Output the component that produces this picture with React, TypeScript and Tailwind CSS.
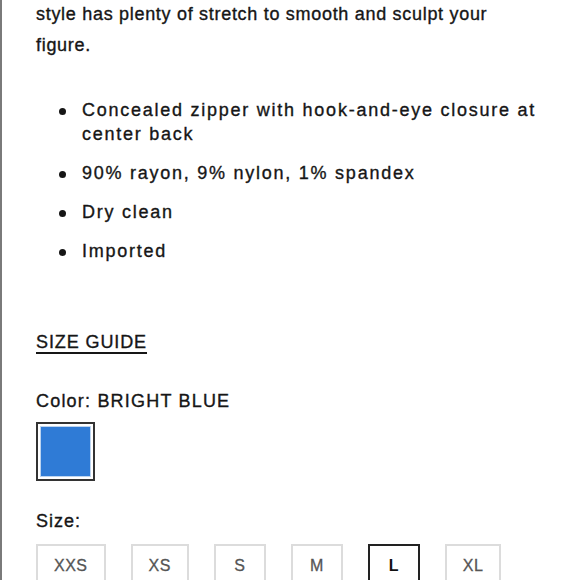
const bullets = [
  ["Concealed zipper with hook-and-eye closure at", "center back"],
  ["90% rayon, 9% nylon, 1% spandex"],
  ["Dry clean"],
  ["Imported"],
];

const sizes = ["XXS", "XS", "S", "M", "L", "XL"];

export default function App() {
  const selected = "L";

  return (
    <div className="h-[580px] overflow-hidden border-l-2 border-[#7a7a7a] bg-white pl-[34px] font-['Liberation_Sans',Arial,sans-serif] text-[#161616] [-webkit-text-stroke:0.35px_#161616]">
      <p className="-mt-[1px] w-[480px] text-[18px] leading-[31px] tracking-[0.7px]">
        style has plenty of stretch to smooth and sculpt your figure.
      </p>

      <ul className="mt-[37px] flex flex-col gap-[15px] pl-[23px]">
        {bullets.map((lines) => (
          <li key={lines[0]} className="flex items-start text-[18px] leading-[24px] tracking-[1.75px]">
            <span className="mr-[16px] mt-[10px] size-[7px] shrink-0 rounded-full bg-[#161616]" />
            <span>
              {lines.map((l) => (
                <span key={l} className="block">
                  {l}
                </span>
              ))}
            </span>
          </li>
        ))}
      </ul>

      <a href="#" className="mt-[67px] block w-fit text-[18px] leading-[24px] tracking-[0.9px] underline decoration-[2px] underline-offset-[4px]">
        SIZE GUIDE
      </a>

      <p className="mt-[35px] text-[18px] leading-[24px] tracking-[1.2px]">
        Color: BRIGHT BLUE
      </p>

      <button className="mt-[9px] block size-[59px] border-2 border-[#333] p-[2px]">
        <span className="block size-full border border-[#bcd4f0] bg-[#2f7bd6]" />
      </button>

      <p className="mt-[28px] text-[18px] leading-[24px] tracking-[1px]">Size:</p>

      <div className="mt-[11px] flex gap-[25px]">
        {sizes.map((s) => (
          <button
            key={s}
            className={
              s === selected
                ? "h-[44px] min-w-[52px] border-2 border-[#222] px-[16px] text-[16px] font-bold tracking-[0.5px] text-[#111] [-webkit-text-stroke:0px]"
                : "h-[44px] min-w-[52px] border-2 border-[#dcdcdc] px-[16px] text-[16px] tracking-[0.5px] text-[#555] [-webkit-text-stroke:0.3px_#555]"
            }
          >
            {s}
          </button>
        ))}
      </div>
    </div>
  );
}
